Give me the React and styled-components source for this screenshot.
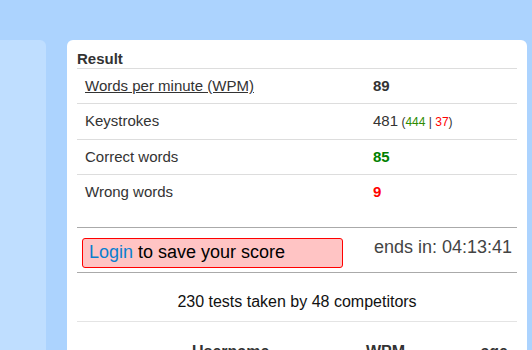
import styled, { createGlobalStyle } from 'styled-components';

const GlobalStyle = createGlobalStyle`
  html, body {
    margin: 0;
    padding: 0;
    background: #acd3fe;
    font-family: "Liberation Sans", Arial, sans-serif;
    color: #333;
    overflow: hidden;
  }
`;

const results = [
  { label: 'Words per minute (WPM)', link: true, value: '89', kind: 'wpm' },
  { label: 'Keystrokes', value: '481', kind: 'keys' },
  { label: 'Correct words', value: '85', kind: 'correct' },
  { label: 'Wrong words', value: '9', kind: 'wrong' },
];

const valueColors = {
  wpm: '#333',
  keys: '#333',
  correct: '#008000',
  wrong: '#ff0000',
};

const App = () => {
  return (
    <>
      <GlobalStyle />
      <Page>
        <SidePanel />
        <MainPanel>
          <Heading>Result</Heading>
          <ResultTable>
            {results.map((r) => (
              <ResultRow key={r.label}>
                <Label>{r.link ? <LabelLink href="#">{r.label}</LabelLink> : r.label}</Label>
                <Value $color={valueColors[r.kind]} $bold={r.kind !== 'keys'}>
                  {r.value}
                  {r.kind === 'keys' && (
                    <KeyDetail>
                      {' '}(<Good>444</Good> | <Bad>37</Bad>)
                    </KeyDetail>
                  )}
                </Value>
              </ResultRow>
            ))}
          </ResultTable>

          <SaveBar>
            <LoginBox>
              <LoginLink href="#">Login</LoginLink> to save your score
            </LoginBox>
            <Countdown>ends in: 04:13:41</Countdown>
          </SaveBar>

          <Stats>230 tests taken by 48 competitors</Stats>

          <RankHeader>
            <span />
            <span>Username</span>
            <span>WPM</span>
            <AgeCol>age</AgeCol>
          </RankHeader>
        </MainPanel>
      </Page>
    </>
  );
};

const Page = styled.div`
  display: grid;
  grid-template-columns: 46px 460px;
  column-gap: 21px;
  padding-top: 40px;
  height: 310px;
`;

const SidePanel = styled.div`
  background: #bfdeff;
  border-top-right-radius: 6px;
`;

const MainPanel = styled.div`
  background: #fff;
  border-radius: 6px 6px 0 0;
  padding: 10px 10px 0;
`;

const Heading = styled.div`
  font-size: 15px;
  font-weight: 700;
  line-height: 17px;
  padding-bottom: 1px;
  color: #333;
`;

const ResultTable = styled.div`
  display: flex;
  flex-direction: column;
`;

const ResultRow = styled.div`
  display: grid;
  grid-template-columns: 296px 1fr;
  border-top: 1px solid #ddd;
  padding: 8px 0;
  font-size: 15px;
  line-height: 18px;
`;

const Label = styled.div`
  padding-left: 8px;
  color: #333;
`;

const LabelLink = styled.a`
  color: #333;
  text-decoration: underline;
`;

const Value = styled.div`
  color: ${({ $color }) => $color};
  font-weight: ${({ $bold }) => ($bold ? 700 : 400)};
`;

const KeyDetail = styled.span`
  font-size: 12px;
  color: #333;
`;

const Good = styled.span`
  color: #2e8b00;
`;

const Bad = styled.span`
  color: #ff0000;
`;

const SaveBar = styled.div`
  display: flex;
  justify-content: space-between;
  align-items: flex-start;
  margin-top: 18px;
  border-top: 1px solid #aaa;
  border-bottom: 1px solid #aaa;
  padding: 9px 5px 4px 5px;
`;

const LoginBox = styled.div`
  width: 247px;
  margin-top: 1px;
  padding: 3px 6px 5px;
  border: 1px solid #ff0000;
  border-radius: 3px;
  background: #ffc4c4;
  font-size: 18px;
  line-height: 20px;
  color: #000;
`;

const LoginLink = styled.a`
  color: #0a7fcf;
  text-decoration: none;
`;

const Countdown = styled.div`
  font-size: 18px;
  line-height: 20px;
  color: #444;
`;

const Stats = styled.div`
  text-align: center;
  font-size: 16px;
  line-height: 20px;
  color: #111;
  padding: 19px 0 9px;
  border-bottom: 1px solid #e4e4e4;
`;

const RankHeader = styled.div`
  display: grid;
  grid-template-columns: 115px 174px 1fr 40px;
  padding: 20px 9px 0 0;
  font-size: 16px;
  font-weight: 700;
  line-height: 20px;
  color: #333;
`;

const AgeCol = styled.span`
  text-align: right;
`;

export default App;
